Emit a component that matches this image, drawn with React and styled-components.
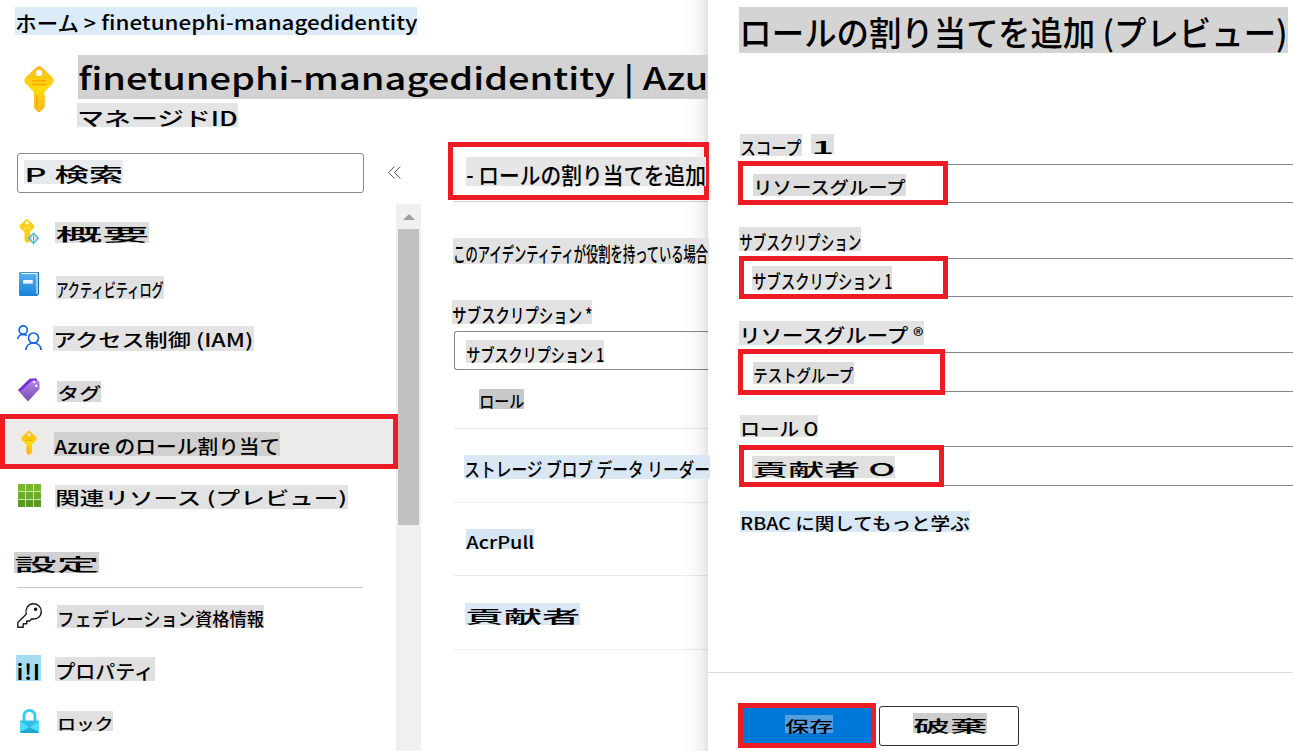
import React, { useMemo } from "react";
import styled, { createGlobalStyle } from "styled-components";

const FONT = '"Noto Sans CJK JP", "Noto Sans", sans-serif';
const WEIGHT = 500;
const ASCENT = 1.16;

const GlobalStyle = createGlobalStyle`
  * { box-sizing: border-box; }
  body { margin: 0; background: #fff; overflow: hidden; }
`;

/* ---------- stretched text label ---------- */

let ctx;
function fit(text, w, h) {
  if (!ctx) ctx = document.createElement("canvas").getContext("2d");
  ctx.font = `${WEIGHT} 100px ${FONT}`;
  const m = ctx.measureText(text);
  const size = h / (ASCENT + Math.max(0, m.actualBoundingBoxDescent) / 100);
  const px = Math.round(size);
  const sy = size / px;
  const sx = w / ((m.width * px) / 100);
  // whole-pixel font ascent is corrected so the baseline lands at its exact height
  const dy = ASCENT * size - Math.round(ASCENT * px) * sy;
  return { fontSize: `${px}px`, transform: `translate(0.3px, ${dy}px) scale(${sx}, ${sy})` };
}

const LabelBox = styled.div`
  position: relative;
  z-index: 2;
  flex: none;
  width: ${(p) => p.$w}px;
  height: ${(p) => p.$h}px;
  margin: ${(p) => p.$mt}px 0 0 ${(p) => p.$ml}px;
  background: ${(p) => p.$bg};
`;

const LabelText = styled.span`
  display: block;
  width: max-content;
  font-family: ${FONT};
  font-weight: ${WEIGHT};
  line-height: normal;
  white-space: pre;
  color: #000;
  transform-origin: 0 0;
`;

function Label({ text, w, h, tw = w, th = h, mt = 0, ml = 0, bg = "#e0e0e0" }) {
  const style = useMemo(() => fit(text, tw, th), [text, tw, th]);
  return (
    <LabelBox $w={w} $h={h} $mt={mt} $ml={ml} $bg={bg}>
      <LabelText style={style}>{text}</LabelText>
    </LabelBox>
  );
}

/* ---------- page frame ---------- */

const Page = styled.div`
  display: flex;
  width: 1293px;
  height: 751px;
  overflow: hidden;
  background: #fff;
`;

const Main = styled.div`
  position: relative;
  flex: none;
  width: 708px;
  height: 751px;
  display: flex;
  flex-direction: column;
  &::after {
    content: "";
    position: absolute;
    z-index: 1;
    top: 0;
    right: 0;
    width: 28px;
    height: 100%;
    background: linear-gradient(to right, rgba(0,0,0,0), rgba(0,0,0,0.02) 50%, rgba(0,0,0,0.055) 80%, rgba(0,0,0,0.12));
  }
`;

const Header = styled.header`
  height: 142px;
  flex: none;
  padding-top: 7px;
`;

const Breadcrumb = styled.div`
  display: flex;
  padding-left: 15px;
`;

const TitleRow = styled.div`
  display: flex;
  margin-top: 20px;
`;

const TitleIcon = styled.div`
  width: 77px;
  padding: 11px 0 0 24px;
  svg { display: block; }
`;

const Columns = styled.div`
  display: flex;
  flex: 1;
  min-height: 0;
`;

/* ---------- sidebar ---------- */

const Sidebar = styled.aside`
  width: 421px;
  flex: none;
  display: flex;
  flex-direction: column;
`;

const SearchRow = styled.div`
  display: flex;
  height: 62px;
  padding: 11px 0 0 17px;
`;

const SearchBox = styled.div`
  width: 347px;
  height: 40px;
  border: 1px solid #8a8886;
  border-radius: 3px;
`;

const Collapse = styled.div`
  padding: 13px 0 0 24px;
  svg { display: block; }
`;

const SidebarBody = styled.div`
  display: flex;
  flex: 1;
  min-height: 0;
`;

const Menu = styled.nav`
  width: 396px;
  flex: none;
  padding-top: 1px;
`;

const MenuRow = styled.div`
  display: flex;
  height: ${(p) => p.$h}px;
`;

const SelectedRow = styled(MenuRow)`
  position: relative;
  z-index: 3;
  width: 398px;
  background: #edebe9;
  border: 5px solid #ed1c24;
  margin-right: -2px;
`;

const IconSlot = styled.div`
  flex: none;
  width: ${(p) => p.$w || 53}px;
  padding: ${(p) => p.$top}px 0 0 ${(p) => p.$left}px;
  svg { display: block; }
`;

const SectionHead = styled.div`
  height: 68px;
  padding-top: 30px;
`;

const SectionRule = styled.div`
  width: 346px;
  height: 1px;
  margin: 14px 0 0 17px;
  background: #c8c8c8;
`;

const PropTile = styled.div`
  width: 25px;
  height: 26px;
  background: #a5dcf2;
`;

const Scrollbar = styled.div`
  width: 25px;
  background: #f0f0f0;
  padding: 10px 2px 0;
`;

const ScrollArrow = styled.div`
  width: 0;
  height: 0;
  margin: 0 auto 9px;
  border: 6px solid transparent;
  border-top: 0;
  border-bottom-color: #a0a0a0;
`;

const ScrollThumb = styled.div`
  height: 296px;
  background: #c1c1c1;
`;

/* ---------- content ---------- */

const Content = styled.main`
  flex: 1;
  min-width: 0;
`;

const ToolbarMark = styled.div`
  position: relative;
  z-index: 2;
  width: 261px;
  height: 58px;
  margin-left: 27px;
  border: 5px solid #ed1c24;
`;

const Rule = styled.div`
  height: 1px;
  margin: ${(p) => p.$mt}px 0 0 33px;
  background: ${(p) => p.$c || "#ebebeb"};
`;

const SelectBox = styled.div`
  height: 39px;
  margin: 7px 0 0 33px;
  border: 1px solid #8a8886;
  border-right: 0;
  border-radius: 3px 0 0 3px;
`;

/* ---------- side panel ---------- */

const Panel = styled.section`
  flex: 1;
  min-width: 0;
  display: flex;
  flex-direction: column;
  background: #fff;
`;

const Form = styled.div`
  height: 672px;
  padding-top: 7px;
`;

const Inline = styled.div`
  display: flex;
`;

const Field = styled.div`
  position: relative;
  height: ${(p) => p.$h}px;
  margin: ${(p) => p.$mt}px 0 0 32px;
  border: solid #858585;
  border-width: 1px 0;
`;

const Mark = styled.div`
  position: absolute;
  z-index: 3;
  left: ${(p) => p.$x}px;
  top: ${(p) => p.$y}px;
  width: ${(p) => p.$w}px;
  height: ${(p) => p.$h}px;
  border: 5px solid #ed1c24;
`;

const Footer = styled.footer`
  display: flex;
  flex: 1;
  border-top: 1px solid #dcdcdc;
  padding: 30px 0 0 30px;
`;

const SaveButton = styled.div`
  width: 138px;
  height: 45px;
  border: 5px solid #ed1c24;
  background: #0078d7;
`;

const DiscardButton = styled.div`
  width: 140px;
  height: 40px;
  margin: 3px 0 0 3px;
  border: 1px solid #323130;
  border-radius: 3px;
`;

/* ---------- icons ---------- */

const KeyIcon = ({ w, h, id }) => (
  <svg width={w} height={h} viewBox="0 0 30 46" preserveAspectRatio="none">
    <defs>
      <linearGradient id={id} x1="0" y1="0" x2="0" y2="1">
        <stop offset="0" stopColor="#ffb81c" />
        <stop offset="0.5" stopColor="#ffd90f" />
        <stop offset="1" stopColor="#fbb424" />
      </linearGradient>
    </defs>
    <path
      fillRule="evenodd"
      fill={`url(#${id})`}
      d="M12.500 1Q15-.8 17.500 1L28.500 11.500Q30.800 14.500 28.500 17.500L20.500 26V29.500L21.500 31 20.300 33 21.500 35 20.300 37.500 21.300 39.500 20 42 16.500 45.400Q15 46.400 13.500 45.400L10 42V26L1.500 17.500Q-.8 14.500 1.500 11.500ZM15 3.700a3.200 3.200 0 1 0 0 6.400a3.200 3.200 0 1 0 0-6.400Z"
    />
    <path d="M8 14.800H22M8 18.400H22" stroke="#f7a800" strokeWidth="1.500" />
    <path d="M12.800 29V41" stroke="#f7a313" strokeWidth="1.400" />
  </svg>
);

const OverviewIcon = () => (
  <svg width="21" height="26" viewBox="0 0 21 26">
    <path fillRule="evenodd" fill="#fccf14" d="M6.800.6Q8 0 9 .6L14.800 6Q15.600 7.500 14.800 9L11 13V14.500L12 15.500 11 17 12 18.500 11 20V22.500L8.500 24 5.500 21.500V13L1 9Q.2 7.500 1 6ZM8 2a1.700 1.700 0 1 0 0 3.400a1.700 1.700 0 1 0 0-3.400Z" />
    <path d="M4.500 8H11.500M4.500 10H11.500" stroke="#f3e05a" strokeWidth=".8" />
    <path d="M14.500 13.200 20.300 19.300 14.500 25.400 8.700 19.300Z" fill="#50b4dc" />
    <path d="M14.500 15 18.500 19.300 14.500 23.600 10.500 19.300Z" fill="#a6dcf0" />
    <path d="M13.600 16.500V22M15.600 16.500V22" stroke="#fff" strokeWidth="1" fill="none" />
    <path d="M14.600 16V22.500" stroke="#3ba4d4" strokeWidth="1" fill="none" />
  </svg>
);

const BookIcon = () => (
  <svg width="20" height="24" viewBox="0 0 20 24">
    <defs>
      <linearGradient id="book" x1="0" y1="0" x2="0" y2="1">
        <stop offset="0" stopColor="#55b0f2" />
        <stop offset="1" stopColor="#1781d6" />
      </linearGradient>
    </defs>
    <path d="M2 0H19Q20 0 20 1V22L18 24H2Q0 24 0 22V2Q0 0 2 0Z" fill="#1272ae" />
    <path d="M2.200 .8H18.700V22H17V2H1.400Z" fill="#e7f4fc" />
    <path d="M0 2H17.400V24H2Q0 24 0 22Z" fill="url(#book)" />
    <rect x="4.200" y="8" width="9.500" height="3.600" fill="#fff" />
    <path d="M4.500 10H13.500" stroke="#cbe5f8" strokeWidth=".7" />
  </svg>
);

const PeopleIcon = () => (
  <svg width="25" height="25" viewBox="0 0 25 25" fill="none" stroke="#1566dd" strokeWidth="1.700">
    <circle cx="6.200" cy="5" r="4.100" />
    <path d="M.9 14C1 11.500 3 9.400 6 9.300 7.600 9.300 8.800 9.800 9.800 10.600" />
    <circle cx="16.500" cy="13" r="5" />
    <path d="M8.800 25C9.300 20.800 12.500 18 16.500 18S23.700 20.800 24.200 25" />
  </svg>
);

const TagIcon = () => (
  <svg width="22" height="24" viewBox="0 0 22 24">
    <defs>
      <linearGradient id="tag" x1="0" y1="0" x2="0" y2="1">
        <stop offset="0" stopColor="#b184e8" />
        <stop offset="1" stopColor="#7a4cb4" />
      </linearGradient>
    </defs>
    <path d="M0 12 11.500.8 18 .2 19.200 2V8L7 20Z" fill="#7430d6" />
    <path d="M1.800 14 13 3.600 20.800 3 21.500 4V11L10 23.600Z" fill="url(#tag)" />
    <circle cx="16" cy="3.800" r="1.500" fill="#e9dcfa" />
    <circle cx="18.200" cy="7.800" r="1.800" fill="#fff" stroke="#8c56d4" strokeWidth=".7" />
  </svg>
);

const GridIcon = () => (
  <svg width="23" height="23" viewBox="0 0 23 23">
    <rect width="23" height="23" fill="#c9e8a8" />
    {[0, 1, 2].map((r) =>
      [0, 1, 2].map((c) => (
        <rect key={`${r}${c}`} x={c * 8} y={r * 8} width="7" height="7" fill={["#76b82a", "#6cab2b", "#5c9a22"][r]} />
      ))
    )}
  </svg>
);

const OutlineKeyIcon = () => (
  <svg width="25" height="25" viewBox="0 0 25 25" fill="none" stroke="#1c1c1c" strokeWidth="1.400" strokeLinejoin="round">
    <path d="M.8 24.300V19.500L9.200 11.200C8 6 11 .8 16.300.8 20.800.8 24.300 4.200 24.300 8.500 24.300 13.500 19.500 17 14.800 15.800L12.600 18H9.700V20.800H6.200V24.300Z" />
    <circle cx="18.600" cy="6.300" r="1.100" fill="#1c1c1c" />
  </svg>
);

const LockIcon = () => (
  <svg width="19" height="24" viewBox="0 0 19 24">
    <defs>
      <linearGradient id="lock" x1="0" y1="0" x2="0" y2="1">
        <stop offset="0" stopColor="#37c5ee" />
        <stop offset="1" stopColor="#1aa3d0" />
      </linearGradient>
    </defs>
    <path d="M4 12V6.500a5.500 5 0 0 1 11 0V12" fill="none" stroke="#32cbf5" strokeWidth="2.900" />
    <rect y="11.500" width="19" height="12.500" rx="1" fill="url(#lock)" />
    <path d="M0 12.500 9.500 18 0 23Z" fill="#4fdcfb" />
    <path d="M19 12.500 9.500 18 19 23Z" fill="#4fdcfb" />
  </svg>
);

const ChevronsIcon = () => (
  <svg width="13" height="13" viewBox="0 0 13 13" fill="none" stroke="#555" strokeWidth="1">
    <path d="M6.500.5.700 6.500 6.500 12.500M12.300.5 6.500 6.500 12.300 12.500" />
  </svg>
);

/* ---------- data ---------- */

const MENU = [
  { text: "概要", rowH: 53, icon: <OverviewIcon />, il: 19, it: 14, x: 55, mt: 17, w: 94, h: 21, bg: "#dedede" },
  { text: "アクティビティログ", rowH: 52, icon: <BookIcon />, il: 19, it: 14, x: 56, mt: 18, w: 108, tw: 109.5, h: 23 },
  { text: "アクセス制御 (IAM)", rowH: 53, icon: <PeopleIcon />, il: 17, it: 15, x: 53, mt: 16, w: 201, h: 25, bg: "#e3e3e3" },
  { text: "タグ", rowH: 51, icon: <TagIcon />, il: 18, it: 15, x: 57, mt: 18, w: 44, h: 21, bg: "#d9d9d9" },
  { text: "Azure のロール割り当て", selected: true, rowH: 55, icon: <KeyIcon w={16} h={24} id="k2" />, il: 16, it: 12, x: 49, mt: 13, w: 226, h: 24, bg: "#d1d0ce" },
  { text: "関連リソース (プレビュー)", rowH: 53, icon: <GridIcon />, il: 18, it: 15, x: 55, mt: 16, w: 293, h: 24, bg: "#e2e2e2" },
];

const SETTINGS = [
  { text: "フェデレーション資格情報", rowH: 52, icon: <OutlineKeyIcon />, il: 17, it: 13, x: 57, mt: 15, w: 207, h: 23, bg: "#dedede" },
  {
    text: "プロパティ",
    rowH: 53,
    icon: (
      <PropTile>
        <Label text="i!I" w={24} h={25} bg="transparent" />
      </PropTile>
    ),
    il: 16, it: 13, x: 55, mt: 15, w: 100, h: 24,
  },
  { text: "ロック", rowH: 56, icon: <LockIcon />, il: 20, it: 14, x: 57, mt: 16, w: 56, h: 20 },
];

const FIELDS = [
  { label: { text: "サブスクリプション", w: 122, h: 24, mt: 24, ml: 31 }, mt: 7, h: 39, mark: [-1, -3, 209, 43], value: { text: "サブスクリプション 1", w: 140, h: 24, mt: 7, ml: 12 } },
  { label: { text: "リソースグループ ®", w: 185, tw: 186.5, h: 24, mt: 24, ml: 31, bg: "#e2e2e2" }, mt: 7, h: 40, mark: [-2, -4, 207, 46], value: { text: "テストグループ", w: 101, h: 22, mt: 9, ml: 13, bg: "#dcdcdc" } },
  { label: { text: "ロール O", w: 78, h: 22, mt: 23, ml: 32, bg: "#e2e2e0" }, mt: 9, h: 40, mark: [-1, -2, 205, 42], value: { text: "貢献者 O", w: 143, h: 22, mt: 9, ml: 12 } },
];

function MenuItem({ item }) {
  const Row = item.selected ? SelectedRow : MenuRow;
  return (
    <Row $h={item.rowH}>
      <IconSlot $w={item.x} $left={item.il} $top={item.it}>{item.icon}</IconSlot>
      <Label text={item.text} w={item.w} tw={item.tw} h={item.h} mt={item.mt} bg={item.bg} />
    </Row>
  );
}

export default function App() {
  return (
    <Page>
      <GlobalStyle />
      <Main>
        <Header>
          <Breadcrumb>
            <Label text="ホーム > " w={86} h={28} th={25.3} bg="#dcebf8" />
            <Label text="finetunephi-managedidentity" w={316} h={28} bg="#dcebf8" />
          </Breadcrumb>
          <TitleRow>
            <TitleIcon>
              <KeyIcon w={30} h={46} id="k1" />
            </TitleIcon>
            <div>
              <Label text="finetunephi-managedidentity | Azu" w={630} h={44} ml={1} bg="#d2d2d2" />
              <Label text="マネージドID" w={161} h={24} mt={4} bg="#e4e4e4" />
            </div>
          </TitleRow>
        </Header>
        <Columns>
          <Sidebar>
            <SearchRow>
              <SearchBox>
                <Label text="P 検索" w={99} h={24} mt={6} ml={6} bg="#e7eaed" />
              </SearchBox>
              <Collapse>
                <ChevronsIcon />
              </Collapse>
            </SearchRow>
            <SidebarBody>
              <Menu>
                {MENU.map((m) => (
                  <MenuItem key={m.text} item={m} />
                ))}
                <SectionHead>
                  <Label text="設定" w={85} h={21} ml={14} bg="#d0d0d0" />
                  <SectionRule />
                </SectionHead>
                {SETTINGS.map((m) => (
                  <MenuItem key={m.text} item={m} />
                ))}
              </Menu>
              <Scrollbar>
                <ScrollArrow />
                <ScrollThumb />
              </Scrollbar>
            </SidebarBody>
          </Sidebar>
          <Content>
            <ToolbarMark>
              <Label text="- ロールの割り当てを追加" w={240} h={29} mt={10} ml={13} bg="#e6e6e6" />
            </ToolbarMark>
            <Rule $mt={1} $c="#cfcfcf" />
            <Label text="このアイデンティティが役割を持っている場合" w={256} tw={257.5} h={26} mt={36} ml={32} bg="#e2e2e2" />
            <Label text="サブスクリプション *" w={140} h={24} mt={36} ml={31} bg="#e2e2e2" />
            <SelectBox>
              <Label text="サブスクリプション 1" w={138} h={23} mt={8} ml={11} bg="#e2e2e2" />
            </SelectBox>
            <Label text="ロール" w={45} h={20} mt={19} ml={58} bg="#c8c8c8" />
            <Rule $mt={19} $c="#e6e6e6" />
            <Label text="ストレージ ブロブ データ リーダー" w={246} h={24} mt={26} ml={43} bg="#dae8f5" />
            <Rule $mt={23} />
            <Label text="AcrPull" w={68} h={20} mt={26} ml={45} bg="#d6e5f4" />
            <Rule $mt={26} />
            <Label text="貢献者" w={115} h={22} mt={27} ml={44} bg="#d9e7f6" />
            <Rule $mt={24} />
          </Content>
        </Columns>
      </Main>
      <Panel>
        <Form>
          <Label text="ロールの割り当てを追加 (プレビュー)" w={549} h={46} ml={31} bg="#d4d4d4" />
          <Inline>
            <Label text="スコープ" w={62} h={22} mt={81} ml={32} />
            <Label text="1" w={23} h={20} mt={81} ml={9} />
          </Inline>
          <Field $mt={8} $h={39}>
            <Mark $x={-2} $y={-4} $w={210} $h={44} />
            <Label text="リソースグループ" w={153} tw={154.5} h={22} mt={9} ml={13} bg="#dcdcdc" />
          </Field>
          {FIELDS.map((f) => (
            <React.Fragment key={f.label.text}>
              <Label {...f.label} />
              <Field $mt={f.mt} $h={f.h}>
                <Mark $x={f.mark[0]} $y={f.mark[1]} $w={f.mark[2]} $h={f.mark[3]} />
                <Label {...f.value} />
              </Field>
            </React.Fragment>
          ))}
          <Label text="RBAC に関してもっと学ぶ" w={230} tw={231} h={21} mt={25} ml={32} bg="#d8e7f5" />
        </Form>
        <Footer>
          <SaveButton>
            <Label text="保存" w={48} h={18} mt={7} ml={42} bg="#549fe1" />
          </SaveButton>
          <DiscardButton>
            <Label text="破棄" w={74} h={20} mt={6} ml={33} bg="#cccccc" />
          </DiscardButton>
        </Footer>
      </Panel>
    </Page>
  );
}
